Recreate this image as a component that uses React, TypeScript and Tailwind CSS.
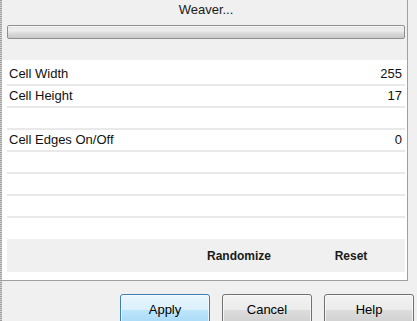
const rows: { label: string; value: string }[] = [
  { label: 'Cell Width', value: '255' },
  { label: 'Cell Height', value: '17' },
  { label: '', value: '' },
  { label: 'Cell Edges On/Off', value: '0' },
  { label: '', value: '' },
  { label: '', value: '' },
  { label: '', value: '' },
];

const DialogButton = ({ label, primary = false }: { label: string; primary?: boolean }) => (
  <button
    className={`w-[90px] h-[31px] shrink-0 rounded-[3px] border text-[13px] leading-[16px] text-black flex items-center justify-center ${
      primary
        ? 'border-[#3c7fb1] bg-[linear-gradient(to_bottom,#eaf6fd_0%,#d9f0fc_50%,#bee6fd_51%,#a7d9f5_100%)] shadow-[inset_0_0_0_1px_#ffffffa0]'
        : 'border-[#707070] bg-[linear-gradient(to_bottom,#f2f2f2_0%,#ebebeb_50%,#dddddd_51%,#cfcfcf_100%)] shadow-[inset_0_0_0_1px_#ffffffb0]'
    }`}
  >
    {label}
  </button>
);

export default function App() {
  return (
    <div className="w-[417px] h-[321px] overflow-hidden bg-[#f0f0f0] flex font-['Liberation_Sans',Arial,sans-serif] text-[#111]">
      {/* dotted left edge */}
      <div className="w-[2px] h-full shrink-0 bg-[repeating-linear-gradient(to_bottom,#9c9c9c_0_1px,#d4d4d4_1px_2px)]" />

      <div className="flex-1 flex flex-col">
        {/* panel */}
        <div className="w-[406px] h-[281px] shrink-0 bg-white border-r border-b border-[#a0a0a0] flex flex-col">
          <div className="h-[60px] bg-[#f0f0f0] pl-[5px] pr-[2px] pt-[2px] flex flex-col">
            <div className="text-[13px] leading-[16px] text-center text-[#1a1a1a]">Weaver...</div>
            <div className="mt-[7px] h-[14px] rounded-[2px] border border-[#8f8f8f] bg-[linear-gradient(to_bottom,#e4e4e4_0%,#efefef_35%,#d8d8d8_65%,#c9c9c9_100%)] shadow-[inset_0_1px_0_#f8f8f8]" />
          </div>

          <div className="pl-[5px] pr-[2px] pt-[4px] flex flex-col">
            {rows.map((r, i) => (
              <div
                key={i}
                className="h-[22px] border-b-2 border-[#e9e9e9] flex items-center justify-between pl-[2px] pr-[3px] text-[13px] leading-[16px]"
              >
                <span>{r.label}</span>
                <span>{r.value}</span>
              </div>
            ))}

            <div className="mt-[21px] h-[33px] bg-[#f0f0f0] flex items-center justify-end pr-[9px] text-[12px] font-bold text-[#1a1a1a]">
              <span className="w-[134px] text-center">Randomize</span>
              <span className="w-[90px] text-center">Reset</span>
            </div>
          </div>
        </div>

        {/* dialog buttons */}
        <div className="mt-[13px] flex justify-end gap-[12px] pr-[3px]">
          <DialogButton label="Apply" primary />
          <DialogButton label="Cancel" />
          <DialogButton label="Help" />
        </div>
      </div>
    </div>
  );
}
